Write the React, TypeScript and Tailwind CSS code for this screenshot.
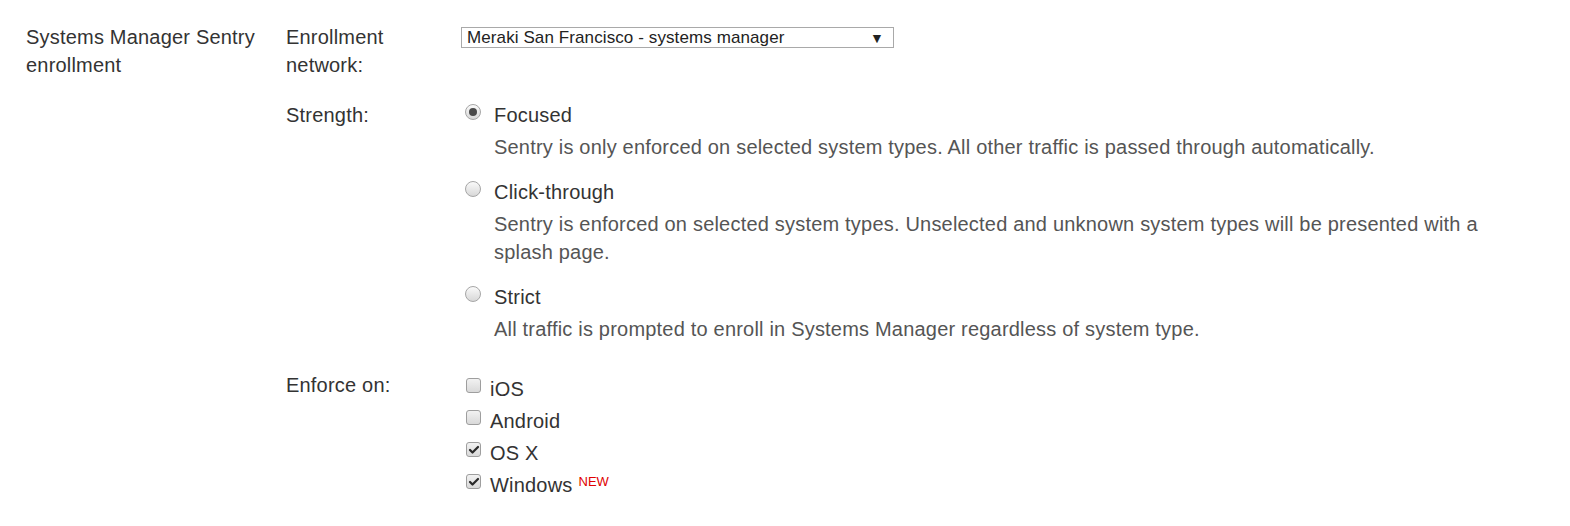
import { Check } from "lucide-react";

const strengthOptions = [
  {
    label: "Focused",
    checked: true,
    desc: "Sentry is only enforced on selected system types. All other traffic is passed through automatically.",
  },
  {
    label: "Click-through",
    checked: false,
    desc: "Sentry is enforced on selected system types. Unselected and unknown system types will be presented with a splash page.",
  },
  {
    label: "Strict",
    checked: false,
    desc: "All traffic is prompted to enroll in Systems Manager regardless of system type.",
  },
];

const systems = [
  { name: "iOS", checked: false },
  { name: "Android", checked: false },
  { name: "OS X", checked: true },
  { name: "Windows", checked: true, isNew: true },
];

const Radio = ({ checked }: { checked: boolean }) => (
  <span className="mt-[3px] flex h-4 w-4 shrink-0 items-center justify-center rounded-full border border-[#a6a6a6] bg-gradient-to-b from-[#fafafa] to-[#d8d8d8]">
    {checked && <span className="h-[8px] w-[8px] rounded-full bg-[#4a4a4a]" />}
  </span>
);

const Checkbox = ({ checked }: { checked: boolean }) => (
  <span className="mt-[3px] flex h-[15px] w-[15px] shrink-0 items-center justify-center rounded-[3px] border border-[#9e9e9e] bg-gradient-to-b from-[#f2f2f2] to-[#d9d9d9]">
    {checked && <Check size={12} strokeWidth={4.5} className="text-[#2a2a2a]" />}
  </span>
);

export default function App() {
  return (
    <div
      className="flex min-h-screen items-start bg-white pt-[23px] pr-[60px] text-[20px] leading-[28px] tracking-[0.2px] text-[#333]"
      style={{ fontFamily: '"Liberation Sans", Arial, sans-serif' }}
    >
      <div className="w-[286px] shrink-0 pl-[26px] pr-4">Systems Manager Sentry enrollment</div>

      <div className="grid flex-1 grid-cols-[175px_1fr] content-start gap-y-[22px]">
        {/* Enrollment network */}
        <div>
          Enrollment
          <br />
          network:
        </div>
        <div className="pt-1">
          <div className="flex h-[21px] w-[433px] items-center justify-between border border-[#a9a9a9] bg-white pl-[5px] pr-[9px] text-[17px] leading-none tracking-[0.1px] text-[#222]">
            <span>Meraki San Francisco - systems manager</span>
            <span className="text-[14px]">▼</span>
          </div>
        </div>

        {/* Strength */}
        <div>Strength:</div>
        <div className="flex flex-col gap-[17px]">
          {strengthOptions.map((o) => (
            <div key={o.label} className="flex gap-[13px] pl-1">
              <Radio checked={o.checked} />
              <div>
                <div>{o.label}</div>
                <div className="mt-1 text-[#555]">{o.desc}</div>
              </div>
            </div>
          ))}
        </div>

        {/* Enforce on */}
        <div className="mt-[6px]">Enforce on:</div>
        <div className="mt-[10px] flex flex-col gap-1 pl-[5px]">
          {systems.map((s) => (
            <div key={s.name} className="flex gap-[9px]">
              <Checkbox checked={s.checked} />
              <span>
                {s.name}
                {s.isNew && (
                  <sup className="ml-[6px] text-[13px] tracking-normal text-[#e00000]">NEW</sup>
                )}
              </span>
            </div>
          ))}
        </div>
      </div>
    </div>
  );
}
